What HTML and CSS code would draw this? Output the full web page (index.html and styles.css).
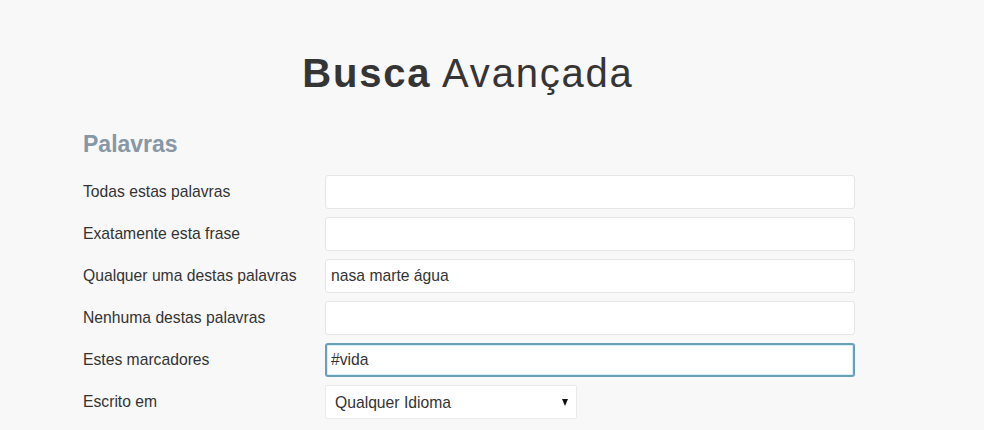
FILE: index.html
```html
<!DOCTYPE html>
<html lang="pt">
<head>
<meta charset="utf-8">
<title>Busca Avançada</title>
<link rel="stylesheet" href="styles.css">
</head>
<body>
<main class="page">
  <h1 class="title"><strong>Busca</strong> Avançada</h1>
  <h2 class="section">Palavras</h2>
  <form class="form">
    <label class="row"><span class="label">Todas estas palavras</span><input class="field" type="text" value=""></label>
    <label class="row"><span class="label">Exatamente esta frase</span><input class="field" type="text" value=""></label>
    <label class="row"><span class="label">Qualquer uma destas palavras</span><input class="field" type="text" value="nasa marte água"></label>
    <label class="row"><span class="label">Nenhuma destas palavras</span><input class="field" type="text" value=""></label>
    <label class="row"><span class="label">Estes marcadores</span><input class="field field-focus" type="text" value="#vida"></label>
    <label class="row"><span class="label">Escrito em</span><span class="select-wrap"><select class="select"><option>Qualquer Idioma</option></select></span></label>
  </form>
</main>
</body>
</html>
```
FILE: styles.css
```css
html, body {
  margin: 0;
  padding: 0;
  background: #f8f8f8;
}
body {
  font-family: "Liberation Sans", Arial, sans-serif;
  color: #333;
}
.page {
  width: 772px;
  margin-left: 83px;
  padding-top: 51px;
}
.title {
  margin: 0;
  font-size: 40px;
  line-height: 44px;
  font-weight: normal;
  letter-spacing: 1.8px;
  text-align: center;
  color: #353535;
  padding-right: 2px;
}
.title strong {
  font-weight: bold;
}
.section {
  margin: 35px 0 0 0;
  font-size: 23px;
  line-height: 28px;
  font-weight: bold;
  color: #8797a4;
}
.form {
  margin-top: 17px;
  display: flex;
  flex-direction: column;
  gap: 8px;
}
.row {
  display: flex;
  align-items: center;
  height: 34px;
}
.label {
  width: 242px;
  flex: none;
  font-size: 15.7px;
  color: #333;
}
.field {
  box-sizing: border-box;
  width: 530px;
  height: 34px;
  margin: 0;
  padding: 0 5px;
  border: 1px solid #e4e6e8;
  border-radius: 3px;
  background: #fff;
  font-family: "Liberation Sans", Arial, sans-serif;
  font-size: 15.7px;
  color: #333;
  outline: none;
}
.field-focus {
  border: 2px solid #6aa0b6;
  padding: 0 4px;
  box-shadow: inset 0 0 0 1px #d4eef7;
}
.select-wrap {
  position: relative;
  display: block;
  width: 252px;
  height: 34px;
}
.select-wrap::after {
  content: "";
  position: absolute;
  right: 9px;
  top: 14px;
  border-left: 3.5px solid transparent;
  border-right: 3.5px solid transparent;
  border-top: 7px solid #111;
}
.select {
  -webkit-appearance: none;
  appearance: none;
  box-sizing: border-box;
  width: 252px;
  height: 34px;
  margin: 0;
  padding: 0 0 0 9px;
  border: 1px solid #eaeaea;
  border-radius: 2px;
  background: #fff;
  font-family: "Liberation Sans", Arial, sans-serif;
  font-size: 15.7px;
  color: #333;
  outline: none;
}
```
